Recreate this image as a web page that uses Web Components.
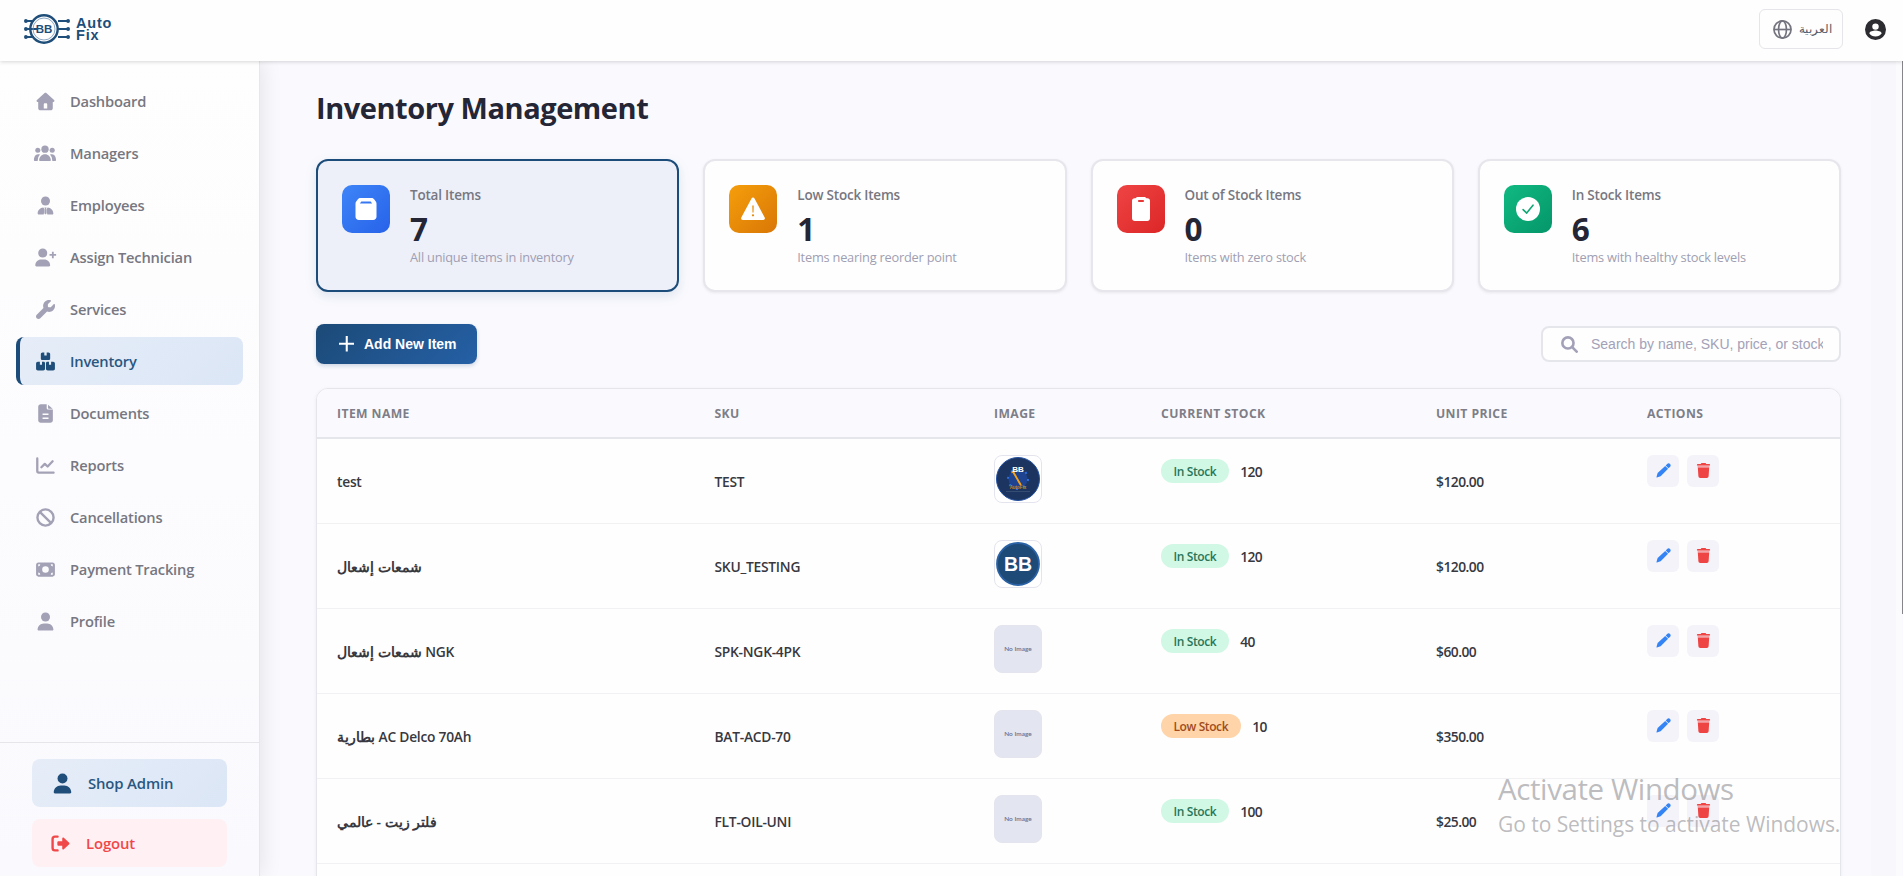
<!DOCTYPE html>
<html lang="en">
<head>
<meta charset="utf-8">
<title>Auto Fix - Inventory Management</title>
<style>
  html, body {
    margin: 0;
    height: 100%;
    overflow: hidden;
  }

  body {
    font-family: "Open Sans", "Noto Sans", sans-serif;
    color: #27272f;
    background: #fafafe;
  }
</style>
</head>
<body>
<auto-fix-app></auto-fix-app>

<script>
const ICONS = {
  house: ['0 0 24 24', '<path fill-rule="evenodd" d="M10.9 1.3 1.2 10.1c-1 .9-.4 2.4.9 2.4h.7v7.9c0 1.500 1.200 2.700 2.700 2.700h13c1.500 0 2.700-1.200 2.700-2.700v-7.900h.7c1.300 0 1.900-1.500.9-2.400L13.100 1.300c-.6-.6-1.600-.6-2.200 0zM11.200 14.300h1.600c.8 0 1.400.6 1.400 1.400v5.200H9.800v-5.200c0-.8.6-1.400 1.400-1.400z"/>'],
  users: ['0 0 28 24', '<circle cx="14" cy="6.600" r="4.600"/><circle cx="4.900" cy="8" r="3.200"/><circle cx="23.100" cy="8" r="3.200"/><path d="M7.600 21.500c-.6 0-1-.4-1-1 0-4.200 3.300-7.600 7.400-7.600s7.400 3.400 7.400 7.600c0 .6-.4 1-1 1zM.9 21.500c-.5 0-.9-.4-.9-.9 0-4.300 2-7.800 5.100-7.800 1 0 1.800.2 2.600.6a10 10 0 0 0-3 8.100zM27.100 21.500c.5 0 .9-.4.9-.9 0-4.300-2-7.800-5.100-7.800-1 0-1.800.2-2.600.6a10 10 0 0 1 3 8.100z"/>'],
  'user-tie': ['0 0 24 24', '<circle cx="12" cy="6.300" r="5.700"/><path d="M9.300 14.600 11 17.200l-1.300 6.200H3.300c-.7 0-1.200-.5-1.200-1.200 0-4 3-7.300 7.200-7.600zM14.700 14.600 13 17.200l1.300 6.200h6.400c.7 0 1.200-.5 1.200-1.200 0-4-3-7.300-7.200-7.600zM10.600 14.500h2.800l-.9 2.100 1 5.200-1.500 1.600-1.500-1.600 1-5.200z"/>'],
  'user-plus': ['0 0 28 24', '<circle cx="10.500" cy="6.300" r="5.700"/><path d="M8.500 14.400h4c4.100 0 7.400 3.300 7.400 7.500 0 .8-.6 1.500-1.400 1.500h-16c-.8 0-1.400-.7-1.400-1.500 0-4.200 3.300-7.500 7.400-7.500zM22.100 4.600h2.300v3h3v2.300h-3v3h-2.300v-3h-3V7.600h3z"/>'],
  wrench: ['0 0 512 512', '<path d="M352 320c88.400 0 160-71.600 160-160c0-15.300-2.200-30.100-6.200-44.200c-3.100-10.800-16.400-13.200-24.300-5.300l-76.800 76.800c-3 3-7.100 4.700-11.300 4.700H336c-8.800 0-16-7.200-16-16V118.600c0-4.200 1.700-8.300 4.700-11.300l76.800-76.800c7.900-7.900 5.400-21.200-5.300-24.300C382.100 2.200 367.300 0 352 0C263.600 0 192 71.600 192 160c0 19.100 3.400 37.500 9.500 54.500L19.900 396.100C7.200 408.800 0 426.100 0 444.100C0 481.600 30.400 512 67.900 512c18 0 35.300-7.200 48-19.900L297.500 310.500c17 6.200 35.400 9.500 54.500 9.500z"/>'],
  boxes: ['0 0 24 24', '<path d="M8.200.6h2.300v3.700h3V.6h2.300c1.200 0 2.100.9 2.100 2.100v5.400c0 1.200-.9 2.100-2.100 2.100H8.200c-1.200 0-2.100-.9-2.100-2.100V2.700c0-1.200.9-2.100 2.100-2.100zM2.400 12.200h2.500v4h2.700v-4h2c1 0 1.800.8 1.800 1.800v7.200c0 1.200-1 2.200-2.200 2.200H2.400c-1.300 0-2.300-1-2.300-2.200v-6.700c0-1.300 1-2.300 2.300-2.300zM14.400 12.200h2v4h2.700v-4h2.500c1.300 0 2.300 1 2.300 2.300v6.700c0 1.200-1 2.200-2.300 2.200h-6.800c-1.200 0-2.200-1-2.200-2.200V14c0-1 .8-1.800 1.800-1.800z"/>'],
  file: ['0 0 24 24', '<path fill-rule="evenodd" d="M6 .3h7.500v4.600c0 1.200 1 2.200 2.200 2.200h5.600v13.400c0 1.800-1.400 3.200-3.200 3.200H6c-1.800 0-3.200-1.400-3.200-3.200v-17C2.800 1.700 4.200.3 6 .3zM8.300 12v1.800h7.500V12zM8.300 17v1.800h7.500V17z"/><path d="M15.200.8 21 6H16c-.5 0-.8-.3-.8-.8z"/>'],
  chart: ['0 0 24 24', '<path fill="none" stroke="currentColor" stroke-width="2.900" stroke-linecap="round" stroke-linejoin="round" d="M1.600 3v16c0 1.200.8 2 2 2h18.600M6.800 14.200l4.300-4.300 3.600 3.400 6.300-6.600"/>'],
  ban: ['0 0 24 24', '<path fill="none" stroke="currentColor" stroke-width="3" d="M12 1.800a10.200 10.200 0 1 0 0 20.400 10.200 10.200 0 0 0 0-20.400zM4.800 4.800l14.400 14.400"/>'],
  money: ['0 0 24 24', '<path fill-rule="evenodd" d="M3 3h18c1.600 0 2.900 1.300 2.900 2.900v12.200c0 1.600-1.300 2.900-2.900 2.900H3C1.400 21 .1 19.700.1 18.100V5.900C.1 4.300 1.400 3 3 3zm9 4.800a4.200 4.200 0 1 0 0 8.400 4.200 4.200 0 0 0 0-8.400zM2.800 8.200A2.700 2.700 0 0 0 5.400 5.500H2.800zm0 7.600v2.700h2.600a2.700 2.700 0 0 0-2.600-2.700zM21.200 8.200V5.500h-2.600a2.700 2.700 0 0 0 2.600 2.700zm0 7.600a2.700 2.700 0 0 0-2.600 2.700h2.600z"/>'],
  user: ['0 0 24 24', '<circle cx="12" cy="6.300" r="5.700"/><path d="M10 14.400h4c4.500 0 8 3.500 8 7.700 0 .7-.6 1.300-1.300 1.300H3.300c-.7 0-1.300-.6-1.300-1.300 0-4.200 3.500-7.700 8-7.700z"/>'],
  logout: ['0 0 24 24', '<path fill="none" stroke="currentColor" stroke-width="3" stroke-linecap="round" d="M8.300 3.300H5a3 3 0 0 0-3 3v11.400a3 3 0 0 0 3 3h3.300"/><path d="M16.200 4.800 23 11c.6.600.6 1.400 0 2l-6.800 6.200c-.9.800-2 .2-2-.9v-3.500H9.600c-.9 0-1.600-.7-1.600-1.600v-2.400c0-.9.700-1.600 1.600-1.600h4.600V5.700c0-1.100 1.100-1.700 2-.9z"/>'],
  globe: ['0 0 24 24', '<g fill="none" stroke="currentColor" stroke-width="2.100"><circle cx="12" cy="12" r="10.800"/><ellipse cx="12" cy="12" rx="5" ry="10.800"/><path d="M1.100 12h21.800"/></g>'],
  account: ['0 0 24 24', '<path fill-rule="evenodd" d="M12 0a12 12 0 1 0 0 24 12 12 0 0 0 0-24zm0 5a3.700 3.700 0 1 1 0 7.400A3.700 3.700 0 0 1 12 5zm0 15c-3 0-5.500-1.400-7-3.500 0-2.300 4.700-3.300 7-3.300s7 1 7 3.300A8.600 8.600 0 0 1 12 20z"/>'],
  box: ['0 0 24 24', '<path fill-rule="evenodd" d="M6.500 1h11c1.100 0 1.900.4 2.600 1.300l1.700 2.300c.5.700.7 1.300.7 2.100v13c0 1.800-1.500 3.300-3.300 3.300H4.800c-1.800 0-3.300-1.500-3.300-3.300v-13c0-.8.200-1.400.7-2.100l1.700-2.300C4.600 1.400 5.400 1 6.500 1zm.8 3.500-1.400 2h12.200l-1.400-2z"/>'],
  warning: ['0 0 24 24', '<path fill-rule="evenodd" d="M10.500 1.500.3 20.500c-.6 1.200.2 2.500 1.500 2.500h20.400c1.300 0 2.100-1.300 1.500-2.500L13.500 1.500c-.7-1.200-2.300-1.200-3 0zM11.300 8.500h1.400l-.2 7h-1zM12 17.200a1.100 1.100 0 1 1 0 2.200 1.100 1.100 0 0 1 0-2.200z"/>'],
  clipboard: ['0 0 24 24', '<path fill-rule="evenodd" d="M8 0h8l1.500 1.200h1c1.400 0 2.500 1.200 2.500 2.600v17.400c0 1.500-1.200 2.800-2.700 2.800H5.700C4.200 24 3 22.700 3 21.200V3.800c0-1.400 1.100-2.600 2.500-2.600h1zm1.200 2.900v2h5.600v-2z"/>'],
  check: ['0 0 24 24', '<circle cx="12" cy="12" r="12"/><path fill="none" stroke="#0fa873" stroke-width="1.600" stroke-linecap="round" stroke-linejoin="round" d="m7.100 12.600 3.600 3.500L17 8.200"/>'],
  plus: ['0 0 24 24', '<path d="M10.400 0h3.200v10.400H24v3.200H13.600V24h-3.200V13.600H0v-3.200h10.400z"/>'],
  search: ['0 0 24 24', '<g fill="none" stroke="currentColor" stroke-width="3.700" stroke-linecap="round"><circle cx="9.800" cy="9.800" r="7.900"/><path d="m15.800 15.800 6.300 6.300"/></g>'],
  pen: ['0 0 24 24', '<path d="M15.500 3.900 17.900 1.500c1.400-1.400 3.300-1.300 4.600 0s1.400 3.200 0 4.600l-2.400 2.400zM14.700 4.700l4.600 4.600L8.200 20.400c-.6.600-1.200.9-2 1.200L1.500 23.200c-.7.200-1-.1-.7-.7l1.400-5.200c.2-.8.600-1.400 1.200-2z"/>'],
  trash: ['0 0 24 24', '<path d="M8.700 0h6.600l1.100 1.500h5c.6 0 1.100.5 1.100 1.100v1.200h-21V2.600c0-.6.500-1.100 1.100-1.100h5z"/><path d="M2.600 4h18.800v3H2.600z" opacity=".45"/><path d="M2.900 7h18.200l-.9 14.200A3 3 0 0 1 17.200 24H6.800a3 3 0 0 1-3-2.800z"/>']
}

const NAV = [
  ['house', 'Dashboard'],
  ['users', 'Managers', 24],
  ['user-tie', 'Employees'],
  ['user-plus', 'Assign Technician', 23],
  ['wrench', 'Services'],
  ['boxes', 'Inventory'],
  ['file', 'Documents'],
  ['chart', 'Reports'],
  ['ban', 'Cancellations'],
  ['money', 'Payment Tracking'],
  ['user', 'Profile']
]

const ITEMS = [
  { name: 'test', sku: 'TEST', image: 'gear', status: 'In Stock', stock: 120, price: '$120.00' },
  { name: 'شمعات إشعال', sku: 'SKU_TESTING', image: 'bb', status: 'In Stock', stock: 120, price: '$120.00' },
  { name: 'شمعات إشعال NGK', sku: 'SPK-NGK-4PK', image: 'none', status: 'In Stock', stock: 40, price: '$60.00' },
  { name: 'بطارية AC Delco 70Ah', sku: 'BAT-ACD-70', image: 'none', status: 'Low Stock', stock: 10, price: '$350.00' },
  { name: 'فلتر زيت - عالمي', sku: 'FLT-OIL-UNI', image: 'none', status: 'In Stock', stock: 100, price: '$25.00' }
]

class BaseElement extends HTMLElement {
  connectedCallback() {
    if (this.shadowRoot) return
    this.attachShadow({mode: "open"})
    this.shadowRoot.innerHTML = this.render()
  }
}

customElements.define('app-icon', class extends BaseElement {
  render() {
    const [viewBox, body] = ICONS[this.getAttribute('name')]
    return `
      <style>
        :host { display: inline-flex; flex: none; width: 18px; height: 18px; }
        svg { width: 100%; height: 100%; fill: currentColor; }
      </style>
      <svg viewBox="${viewBox}">${body}</svg>
    `
  }
})

customElements.define('brand-logo', class extends BaseElement {
  render() {
    return `
      <style>
        :host {
          display: flex;
          align-items: center;
          gap: 6px;
          color: #1e4e79;
          font: bold 14.500px/12.500px "Liberation Sans", sans-serif;
          letter-spacing: .8px;
        }
        svg { width: 46px; height: 30px; }
      </style>
      <svg viewBox="0 0 46 30">
        <g stroke="#1e4e79" fill="none" stroke-width="1.900">
          <path d="M2 7h8M2 15h11M2 23h8M34 7h10M34 15h10M34 23h10"/>
          <circle cx="20" cy="15" r="13.700" stroke-width="2.400"/>
          <circle cx="20" cy="15" r="11" stroke-width=".8" stroke="#6f93b8"/>
        </g>
        <g fill="#1e4e79">
          <circle cx="1.900" cy="7" r="1.900"/><circle cx="1.900" cy="15" r="1.900"/><circle cx="1.900" cy="23" r="1.900"/>
          <circle cx="44.100" cy="7" r="1.900"/><circle cx="44.100" cy="15" r="1.900"/><circle cx="44.100" cy="23" r="1.900"/>
        </g>
        <text x="20" y="19.200" font-size="11.500" text-anchor="middle" letter-spacing="0" style="letter-spacing: 0" fill="#1e4e79">BB</text>
      </svg>
      <div>Auto<br>Fix</div>
    `
  }
})

customElements.define('app-header', class extends BaseElement {
  render() {
    return `
      <style>
        :host {
          display: flex;
          align-items: center;
          height: 61px;
          padding: 0 17px 3px 24px;
          box-sizing: border-box;
          background: #fefefe;
          box-shadow: 0 1px 4px rgba(0, 0, 0, .16);
          z-index: 1;
        }
        .language {
          display: flex;
          align-items: center;
          gap: 7px;
          margin-left: auto;
          width: 84px;
          height: 40px;
          padding: 0 0 0 13px;
          box-sizing: border-box;
          border: 1px solid #e5e5ea;
          border-radius: 6px;
          background: #fefefe;
          color: #5d5d68;
          font: 12px "Open Sans", "Noto Sans", sans-serif;
        }
        .language app-icon { width: 19px; height: 19px; color: #74747f; }
        .language span { padding-bottom: 2px; }
        .account { width: 21px; height: 21px; margin-left: 22px; color: #2c2c31; }
      </style>
      <brand-logo></brand-logo>
      <button class="language"><app-icon name="globe"></app-icon><span>العربية</span></button>
      <app-icon class="account" name="account"></app-icon>
    `
  }
})

customElements.define('nav-item', class extends BaseElement {
  render() {
    return `
      <style>
        :host {
          display: flex;
          align-items: center;
          height: 48px;
          padding-left: 17px;
          gap: 13px;
          border-radius: 8px;
          box-sizing: border-box;
          font-size: 14.700px;
          font-weight: 600;
          letter-spacing: -.2px;
          color: #777781;
        }
        :host([active]) {
          padding-left: 13px;
          border-left: 4px solid #1c4c79;
          background: linear-gradient(135deg, #e6edf8, #dbe6f6);
          color: #2a577f;
        }
        .icon {
          display: flex;
          justify-content: center;
          width: 24px;
          color: #a3a1b5;
        }
        :host([active]) .icon { color: #1e4e79; }
        app-icon { width: ${this.getAttribute('size') ?? 19}px; height: 19px; }
      </style>
      <span class="icon"><app-icon name="${this.getAttribute('icon')}"></app-icon></span>
      <slot></slot>
    `
  }
})

customElements.define('side-bar', class extends BaseElement {
  render() {
    const items = NAV.map(([icon, label, size]) => `
      <nav-item icon="${icon}" ${size ? `size="${size}"` : ''} ${label === 'Inventory' ? 'active' : ''}>${label}</nav-item>`).join('')
    return `
      <style>
        :host {
          display: flex;
          flex-direction: column;
          flex: none;
          width: 260px;
          box-sizing: border-box;
          border-right: 1px solid #e6e6ec;
          background: linear-gradient(#fefefe, #fafafe);
          box-shadow: 2px 0 20px rgba(0, 0, 0, .09);
        }
        nav {
          display: flex;
          flex-direction: column;
          gap: 4px;
          flex: 1;
          padding: 16px 16px 0;
        }
        footer {
          display: flex;
          flex-direction: column;
          gap: 12px;
          height: 134px;
          box-sizing: border-box;
          padding: 16px 32px 0;
          border-top: 1px solid #e5e5ea;
        }
        .action {
          display: flex;
          align-items: center;
          flex: none;
          height: 48px;
          border-radius: 8px;
          box-sizing: border-box;
          font-size: 14.900px;
          font-weight: 600;
          letter-spacing: -.15px;
        }
        .admin {
          padding-left: 20px;
          gap: 15px;
          background: linear-gradient(135deg, #e6edf8, #dbe6f6);
          color: #2a577f;
        }
        .admin app-icon { width: 21px; height: 21px; color: #1e4e79; }
        .logout {
          padding-left: 19px;
          gap: 16px;
          background: #fff0f3;
          color: #f04848;
        }
        .logout app-icon { width: 19px; height: 19px; }
      </style>
      <nav>${items}</nav>
      <footer>
        <div class="action admin"><app-icon name="user"></app-icon>Shop Admin</div>
        <div class="action logout"><app-icon name="logout"></app-icon>Logout</div>
      </footer>
    `
  }
})

customElements.define('stat-card', class extends BaseElement {
  render() {
    return `
      <style>
        :host {
          display: flex;
          gap: 20px;
          flex: 1;
          height: 133px;
          padding: 24px;
          box-sizing: border-box;
          border: 2px solid #e6e6ec;
          border-radius: 12px;
          background: #fefefe;
          box-shadow: 0 1px 3px rgba(0, 0, 0, .07);
        }
        :host([selected]) {
          border-color: #1c4c79;
          background: #edf0f9;
          box-shadow: 0 4px 12px rgba(28, 76, 121, .13);
        }
        .icon {
          display: flex;
          align-items: center;
          justify-content: center;
          flex: none;
          width: 48px;
          height: 48px;
          border-radius: 10px;
          color: #fff;
          background: linear-gradient(135deg, var(--from), var(--to));
        }
        app-icon { width: 24px; height: 24px; }
        .title {
          font-size: 13.500px;
          line-height: 20px;
          font-weight: 600;
          letter-spacing: -.2px;
          color: #777781;
        }
        .value {
          font-size: 31.500px;
          line-height: 38px;
          margin-top: 5px;
          font-weight: 700;
          letter-spacing: -.5px;
          color: #242636;
        }
        .hint {
          font-size: 12.800px;
          line-height: 18px;
          letter-spacing: -.22px;
          color: #a09eb2;
        }
      </style>
      <div class="icon"><app-icon name="${this.getAttribute('icon')}"></app-icon></div>
      <div>
        <div class="title">${this.getAttribute('label')}</div>
        <div class="value">${this.getAttribute('value')}</div>
        <div class="hint"><slot></slot></div>
      </div>
    `
  }
})

customElements.define('item-image', class extends BaseElement {
  picture() {
    const type = this.getAttribute('type')
    if (type === 'gear') {
      return `
        <svg viewBox="0 0 48 48">
          <circle cx="24" cy="24" r="21.500" fill="#1c3560" stroke="#2450a0"/>
          <circle cx="24" cy="24" r="9.500" fill="#1e4390"/>
          <circle cx="24" cy="24" r="10" fill="none" stroke="#2f6fe0" stroke-width="2" stroke-dasharray="2 5.850"/>
          <path d="m19.500 17.500 7 12" stroke="#f5a21a" stroke-width="1.900" stroke-linecap="round"/>
          <path d="m17.500 17.500 4-1.500" stroke="#f5a21a" stroke-width="1.500"/>
          <text x="24" y="17.200" font-size="8" font-weight="bold" fill="#fff">BB</text>
          <text x="24" y="34" font-size="4.500" font-weight="bold" fill="#c9831f">AutoFix</text>
          <path d="M12 36.500h24" stroke="#3e5478" stroke-width=".8"/>
        </svg>`
    }
    if (type === 'bb') {
      return `
        <svg viewBox="0 0 48 48">
          <circle cx="24" cy="24" r="21" fill="#1e4a78" stroke="#2a62a5" stroke-width="1.800"/>
          <text x="24" y="31" font-size="19.500" font-weight="bold" fill="#fff">BB</text>
        </svg>`
    }
    return `<span>No Image</span>`
  }

  render() {
    return `
      <style>
        :host {
          display: flex;
          align-items: center;
          justify-content: center;
          width: 48px;
          height: 48px;
          box-sizing: border-box;
          border: 1px solid #e4e4ee;
          border-radius: 8px;
          background: #fff;
        }
        :host([type="none"]) { background: #e3e6f0; }
        svg { flex: none; width: 48px; height: 48px; }
        text { font-family: "Liberation Sans", sans-serif; text-anchor: middle; letter-spacing: 0; }
        span { font: 600 6.500px Lato, sans-serif; letter-spacing: 0; color: #6d6e8e; margin-top: -1px; }
      </style>
      ${this.picture()}
    `
  }
})

customElements.define('stock-badge', class extends BaseElement {
  render() {
    return `
      <style>
        :host {
          display: inline-flex;
          align-items: center;
          height: 24px;
          padding: 0 12.500px;
          border-radius: 12px;
          font-size: 12px;
          font-weight: 600;
          letter-spacing: -.4px;
          background: #d1f8e5;
          color: #2a7559;
        }
        :host([low]) { background: #fed4a8; color: #a04c1e; }
      </style>
      <slot></slot>
    `
  }
})

customElements.define('inventory-row', class extends BaseElement {
  render() {
    const {name, sku, image, status, stock, price} = this.item
    return `
      <style>
        :host {
          display: grid;
          grid-template-columns: var(--columns);
          height: 85px;
          box-sizing: border-box;
          border-bottom: 1px solid #f1f1f4;
          font-size: 13.800px;
          font-weight: 600;
          letter-spacing: -.25px;
          color: #383840;
        }
        .cell { padding: 0 20px; align-self: center; }
        .top { align-self: start; padding-top: 16px; }
        .price { letter-spacing: -.5px; }
        .stock { display: flex; align-items: center; gap: 11.500px; padding-top: 20px; letter-spacing: -.6px; }
        .actions { display: flex; gap: 8px; }
        button {
          display: flex;
          align-items: center;
          justify-content: center;
          width: 32px;
          height: 32px;
          padding: 0 0 1px;
          border: 0;
          border-radius: 6px;
          background: #f4f3f9;
          color: #3584f5;
        }
        button app-icon { width: 15px; height: 15px; }
        button.delete { color: #ef4444; }
      </style>
      <div class="cell">${name}</div>
      <div class="cell">${sku}</div>
      <div class="cell top"><item-image type="${image}"></item-image></div>
      <div class="cell top stock"><stock-badge ${status === 'Low Stock' ? 'low' : ''}>${status}</stock-badge><span>${stock}</span></div>
      <div class="cell price">${price}</div>
      <div class="cell top actions">
        <button><app-icon name="pen"></app-icon></button>
        <button class="delete"><app-icon name="trash"></app-icon></button>
      </div>
    `
  }
})

customElements.define('inventory-table', class extends BaseElement {
  render() {
    const heads = ['Item Name', 'SKU', 'Image', 'Current Stock', 'Unit Price', 'Actions']
    return `
      <style>
        :host {
          display: block;
          --columns: 377.500px 279.500px 167px 275px 211px 1fr;
          height: 600px;
          border: 1px solid #e5e5ec;
          border-radius: 12px;
          background: #fefefe;
          box-shadow: 0 1px 4px rgba(0, 0, 0, .06);
          overflow: hidden;
        }
        .head {
          display: grid;
          grid-template-columns: var(--columns);
          align-items: center;
          height: 50px;
          box-sizing: border-box;
          border-bottom: 2px solid #e5e5ec;
          background: #fafafe;
          font-size: 12.200px;
          font-weight: 700;
          letter-spacing: .4px;
          text-transform: uppercase;
          color: #7e7e88;
        }
        .head div { padding: 0 20px; }
      </style>
      <div class="head">${heads.map(head => `<div>${head}</div>`).join('')}</div>
      <div class="rows"></div>
    `
  }

  connectedCallback() {
    super.connectedCallback()
    const rows = ITEMS.map(item => {
      const row = document.createElement('inventory-row')
      row.item = item
      return row
    })
    this.shadowRoot.querySelector('.rows').replaceChildren(...rows)
  }
})

customElements.define('tool-bar', class extends BaseElement {
  render() {
    return `
      <style>
        :host { display: flex; align-items: center; justify-content: space-between; height: 40px; }
        .add {
          display: flex;
          align-items: center;
          gap: 10px;
          width: 161px;
          height: 40px;
          padding: 0 0 0 22.500px;
          border: 0;
          border-radius: 8px;
          background: linear-gradient(135deg, #1c4a77, #2560a6);
          box-shadow: 0 2px 4px rgba(28, 76, 121, .2);
          color: #fff;
          font: bold 14px "Liberation Sans", sans-serif;
          white-space: nowrap;
        }
        .add app-icon { width: 15.500px; height: 15.500px; }
        .search {
          display: flex;
          align-items: center;
          gap: 13px;
          width: 300px;
          height: 36px;
          padding: 0 16px 0 18px;
          box-sizing: border-box;
          border: 2px solid #e5e5ec;
          border-radius: 8px;
          background: #fefefe;
          color: #a3a1b8;
          font: 14px "Liberation Sans", sans-serif;
        }
        .search app-icon { width: 17px; height: 17px; }
        .search span { flex: 1; overflow: hidden; white-space: nowrap; }
      </style>
      <button class="add"><app-icon name="plus"></app-icon>Add New Item</button>
      <div class="search"><app-icon name="search"></app-icon><span>Search by name, SKU, price, or stock</span></div>
    `
  }
})

// OS activation notice that floats over the page
customElements.define('activation-notice', class extends BaseElement {
  render() {
    return `
      <style>
        :host {
          position: absolute;
          left: 1498px;
          top: 769px;
          color: rgba(125, 125, 130, .52);
          white-space: nowrap;
          pointer-events: none;
        }
        .title { font-size: 29.500px; line-height: 40px; letter-spacing: -.4px; }
        .text { font-size: 21px; line-height: 30px; letter-spacing: -.05px; }
      </style>
      <div class="title">Activate Windows</div>
      <div class="text">Go to Settings to activate Windows.</div>
    `
  }
})

customElements.define('auto-fix-app', class extends BaseElement {
  render() {
    return `
      <style>
        :host { display: flex; flex-direction: column; height: 100vh; }
        .body { display: flex; flex: 1; min-height: 0; }
        main {
          flex: 1;
          min-width: 0;
          padding: 28px 30px 0 56px;
          overflow: hidden;
        }
        .edge {
          flex: none;
          width: 31px;
          box-sizing: border-box;
          border-right: 6px solid #fbfbfe;
          background: #f7f7fc;
        }
        .scroll { flex: none; width: 1px; background: #fafafe; }
        .thumb { height: 553px; background: #85858a; }
        h1 {
          margin: 0 0 32px;
          font-size: 29px;
          line-height: 38px;
          font-weight: 700;
          letter-spacing: -.45px;
          color: #242636;
        }
        .cards { display: flex; gap: 24px; margin-bottom: 32px; }
        inventory-table { margin-top: 24px; }
      </style>
      <app-header></app-header>
      <div class="body">
        <side-bar></side-bar>
        <main>
          <h1>Inventory Management</h1>
          <div class="cards">
            <stat-card selected icon="box" label="Total Items" value="7" style="--from: #3e85f8; --to: #2762e9">All unique items in inventory</stat-card>
            <stat-card icon="warning" label="Low Stock Items" value="1" style="--from: #f59e0b; --to: #d97706">Items nearing reorder point</stat-card>
            <stat-card icon="clipboard" label="Out of Stock Items" value="0" style="--from: #ef4444; --to: #dc2626">Items with zero stock</stat-card>
            <stat-card icon="check" label="In Stock Items" value="6" style="--from: #10b981; --to: #059669">Items with healthy stock levels</stat-card>
          </div>
          <tool-bar></tool-bar>
          <inventory-table></inventory-table>
        </main>
        <div class="edge"></div>
        <div class="scroll"><div class="thumb"></div></div>
      </div>
      <activation-notice></activation-notice>
    `
  }
})
</script>
</body>
</html>
